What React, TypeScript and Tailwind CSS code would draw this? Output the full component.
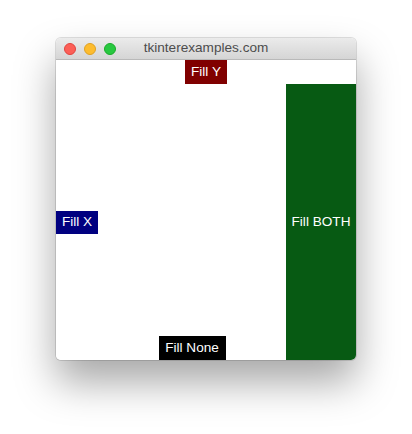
export default function App() {
  return (
    <div className="w-[412px] h-[434px] bg-white pt-[38px] pl-[56px]" style={{ fontFamily: '"Liberation Sans", Arial, sans-serif' }}>
      <div className="w-[300px] h-[322px] rounded-[5px] overflow-hidden flex flex-col shadow-[0_22px_40px_rgba(0,0,0,0.35),0_0_0_1px_rgba(0,0,0,0.12)]">
        {/* title bar */}
        <div className="h-[22px] relative flex items-center justify-center bg-gradient-to-b from-[#ebebeb] to-[#d5d5d5] border-b border-[#b9b9b9]">
          <div className="absolute left-[8px] top-[5px] flex gap-[8px]">
            <span className="w-[12px] h-[12px] rounded-full bg-[#fc5f57] border border-[#e0443e]" />
            <span className="w-[12px] h-[12px] rounded-full bg-[#fdbc2e] border border-[#dea123]" />
            <span className="w-[12px] h-[12px] rounded-full bg-[#28c840] border border-[#1aab29]" />
          </div>
          <span className="text-[13.6px] text-[#4d4d4d]">tkinterexamples.com</span>
        </div>
        {/* content */}
        <div className="flex-1 bg-white flex flex-col text-white text-[13.6px]">
          <div className="flex justify-center">
            <div className="w-[42px] h-[24px] bg-[#800000] flex items-center justify-center">Fill Y</div>
          </div>
          <div className="flex-1 flex">
            <div className="self-center w-[42px] h-[23px] bg-[#000080] flex items-center justify-center">Fill X</div>
            <div className="flex-1 flex flex-col justify-end items-center">
              <div className="w-[67px] h-[24px] bg-black flex items-center justify-center">Fill None</div>
            </div>
            <div className="w-[70px] bg-[#075a13] flex items-center justify-center">Fill BOTH</div>
          </div>
        </div>
      </div>
    </div>
  );
}
